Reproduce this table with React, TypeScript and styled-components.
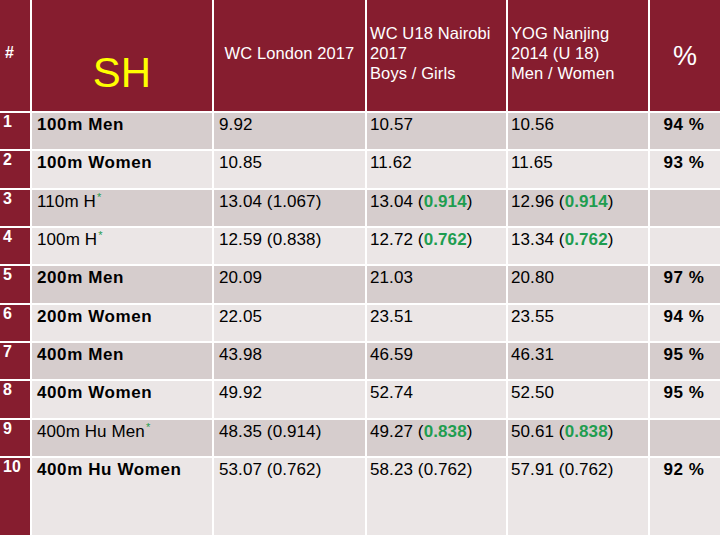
import React from "react";
import styled, { createGlobalStyle } from "styled-components";

const Global = createGlobalStyle`
  html, body { margin: 0; padding: 0; background: #ffffff; }
  body { font-family: "Liberation Sans", Arial, sans-serif; }
`;

const RED = "#861d2f";
const ODD = "#d6cdcd";
const EVEN = "#ebe6e6";
const GREEN = "#1f9d50";

const Table = styled.div`
  display: grid;
  grid-template-columns: 30px 180px 151px 139px 140px 70px;
  grid-template-rows: 111px repeat(9, 36.33px) 77px;
  column-gap: 2px;
  row-gap: 2px;
  width: 720px;
  background: #ffffff;
  font-family: "Liberation Sans", Arial, sans-serif;
`;

const HeadCell = styled.div<{ $align?: "left" | "center" }>`
  background: ${RED};
  color: #ffffff;
  display: flex;
  align-items: center;
  justify-content: ${(p) => (p.$align === "left" ? "flex-start" : "center")};
  padding: 0 2px 6px ${(p) => (p.$align === "left" ? "3px" : "2px")};
  font-size: 16.5px;
  line-height: 20px;
  letter-spacing: 0.1px;
  box-sizing: border-box;
  white-space: nowrap;
`;

const HashCell = styled(HeadCell)`
  justify-content: flex-start;
  padding: 0 0 6px 5px;
  font-size: 16px;
  font-weight: bold;
`;

const SHCell = styled(HeadCell)`
  padding: 34px 0 0 0;
  color: #ffff00;
  font-size: 42px;
  line-height: 48px;
  letter-spacing: 0;
`;

const PctHead = styled(HeadCell)`
  padding: 0;
  font-size: 27px;
  line-height: 30px;
  letter-spacing: 0;
`;

const NumCell = styled.div`
  background: ${RED};
  color: #ffffff;
  font-size: 16px;
  font-weight: bold;
  line-height: 17px;
  padding: 0 0 0 3px;
`;

const Cell = styled.div<{ $odd: boolean; $bold?: boolean; $center?: boolean; $pad?: number }>`
  background: ${(p) => (p.$odd ? ODD : EVEN)};
  color: #000000;
  font-size: 17px;
  line-height: 19px;
  letter-spacing: ${(p) => (p.$bold ? "0.6px" : "0.1px")};
  font-weight: ${(p) => (p.$bold ? "bold" : "normal")};
  padding: 2px 2px 0 ${(p) => (p.$pad ?? 5)}px;
  text-align: ${(p) => (p.$center ? "center" : "left")};
  white-space: nowrap;
  box-sizing: border-box;
`;

const Green = styled.span`
  color: ${GREEN};
  font-weight: bold;
`;

const Star = styled.sup`
  color: ${GREEN};
  font-size: 11px;
  line-height: 0;
  vertical-align: 6px;
  margin-left: 1px;
`;

type Val = string | { base: string; green: string };

type Row = {
  event: string;
  bold: boolean;
  star?: boolean;
  london: string;
  nairobi: Val;
  yog: Val;
  pct: string;
};

const rows: Row[] = [
  { event: "100m Men", bold: true, london: "9.92", nairobi: "10.57", yog: "10.56", pct: "94 %" },
  { event: "100m Women", bold: true, london: "10.85", nairobi: "11.62", yog: "11.65", pct: "93 %" },
  {
    event: "110m H",
    bold: false,
    star: true,
    london: "13.04 (1.067)",
    nairobi: { base: "13.04", green: "0.914" },
    yog: { base: "12.96", green: "0.914" },
    pct: "",
  },
  {
    event: "100m H",
    bold: false,
    star: true,
    london: "12.59 (0.838)",
    nairobi: { base: "12.72", green: "0.762" },
    yog: { base: "13.34", green: "0.762" },
    pct: "",
  },
  { event: "200m Men", bold: true, london: "20.09", nairobi: "21.03", yog: "20.80", pct: "97 %" },
  { event: "200m Women", bold: true, london: "22.05", nairobi: "23.51", yog: "23.55", pct: "94 %" },
  { event: "400m Men", bold: true, london: "43.98", nairobi: "46.59", yog: "46.31", pct: "95 %" },
  { event: "400m Women", bold: true, london: "49.92", nairobi: "52.74", yog: "52.50", pct: "95 %" },
  {
    event: "400m Hu Men",
    bold: false,
    star: true,
    london: "48.35 (0.914)",
    nairobi: { base: "49.27", green: "0.838" },
    yog: { base: "50.61", green: "0.838" },
    pct: "",
  },
  {
    event: "400m Hu Women",
    bold: true,
    london: "53.07 (0.762)",
    nairobi: "58.23 (0.762)",
    yog: "57.91 (0.762)",
    pct: "92 %",
  },
];

const renderVal = (v: Val) =>
  typeof v === "string" ? (
    v
  ) : (
    <>
      {v.base} (<Green>{v.green}</Green>)
    </>
  );

export default function App() {
  return (
    <>
      <Global />
      <Table>
        <HashCell>#</HashCell>
        <SHCell>SH</SHCell>
        <HeadCell>WC London 2017</HeadCell>
        <HeadCell $align="left">
          WC U18 Nairobi
          <br />
          2017
          <br />
          Boys / Girls
        </HeadCell>
        <HeadCell $align="left">
          YOG Nanjing
          <br />
          2014 (U 18)
          <br />
          Men / Women
        </HeadCell>
        <PctHead>%</PctHead>
        {rows.map((r, i) => {
          const odd = i % 2 === 0;
          return (
            <React.Fragment key={i}>
              <NumCell>{i + 1}</NumCell>
              <Cell $odd={odd} $bold={r.bold} $pad={5}>
                {r.event}
                {r.star && <Star>*</Star>}
              </Cell>
              <Cell $odd={odd}>{r.london}</Cell>
              <Cell $odd={odd} $pad={3}>{renderVal(r.nairobi)}</Cell>
              <Cell $odd={odd} $pad={3}>{renderVal(r.yog)}</Cell>
              <Cell $odd={odd} $bold $center $pad={0}>
                {r.pct}
              </Cell>
            </React.Fragment>
          );
        })}
      </Table>
    </>
  );
}
